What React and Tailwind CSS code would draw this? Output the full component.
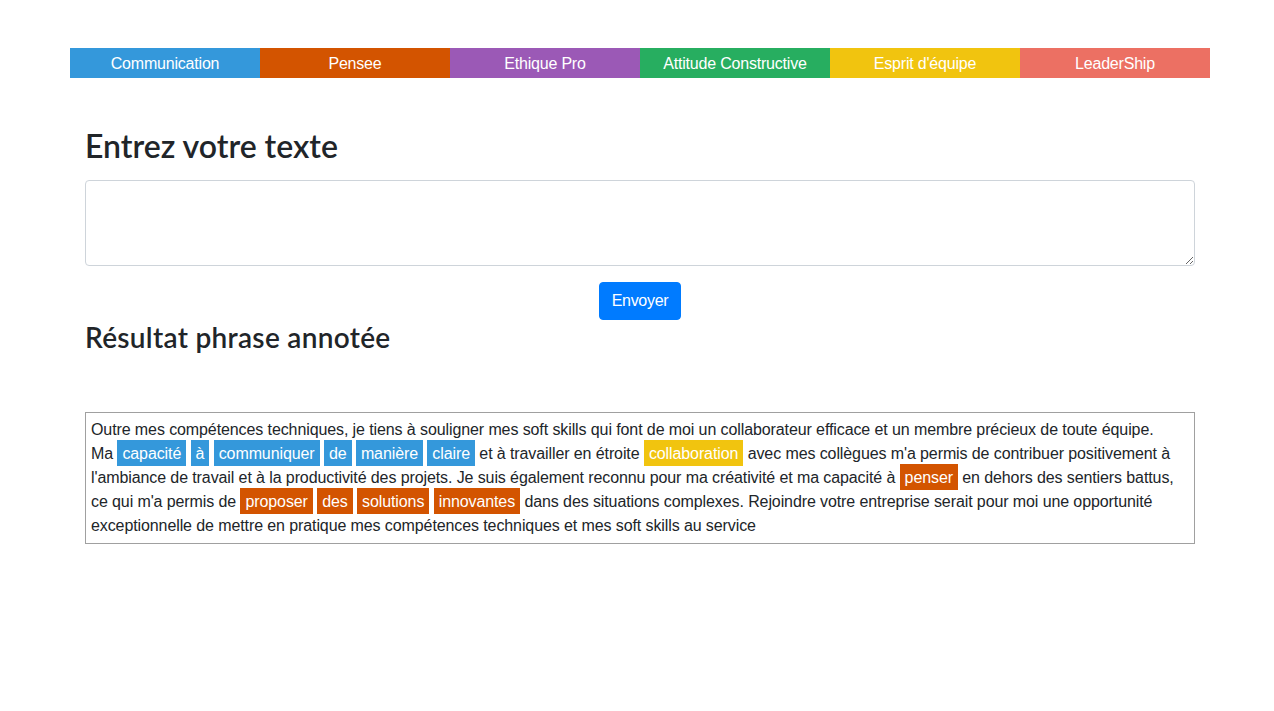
import React, { useState } from 'react';

const categories = [
  { label: 'Communication', bg: 'bg-[#3498db]' },
  { label: 'Pensee', bg: 'bg-[#d35400]' },
  { label: 'Ethique Pro', bg: 'bg-[#9b59b6]' },
  { label: 'Attitude Constructive', bg: 'bg-[#27ae60]' },
  { label: "Esprit d'équipe", bg: 'bg-[#f1c40f]' },
  { label: 'LeaderShip', bg: 'bg-[#ec7063]' },
];

const colorFor = {
  com: 'bg-[#3498db]',
  pen: 'bg-[#d35400]',
  esp: 'bg-[#f1c40f]',
};

// sentence split into plain text, tagged words and line breaks
const annotated = [
  "Outre mes compétences techniques, je tiens à souligner mes soft skills qui font de moi un collaborateur efficace et un membre précieux de toute équipe.",
  'br',
  'Ma',
  ['capacité', 'com'],
  ['à', 'com'],
  ['communiquer', 'com'],
  ['de', 'com'],
  ['manière', 'com'],
  ['claire', 'com'],
  "et à travailler en étroite",
  ['collaboration', 'esp'],
  "avec mes collègues m'a permis de contribuer positivement à",
  'br',
  "l'ambiance de travail et à la productivité des projets. Je suis également reconnu pour ma créativité et ma capacité à",
  ['penser', 'pen'],
  "en dehors des sentiers battus,",
  'br',
  "ce qui m'a permis de",
  ['proposer', 'pen'],
  ['des', 'pen'],
  ['solutions', 'pen'],
  ['innovantes', 'pen'],
  "dans des situations complexes. Rejoindre votre entreprise serait pour moi une opportunité",
  'br',
  "exceptionnelle de mettre en pratique mes compétences techniques et mes soft skills au service",
];

export default function App() {
  const [text, setText] = useState('');

  return (
    <div className="min-h-screen bg-white pl-[6px] font-['Segoe_UI','Liberation_Sans',Arial,sans-serif] text-[#212529]">
      <div className="mx-auto w-[1140px] pt-[48px]">
        <div className="grid grid-cols-6 h-[30px]">
          {categories.map((c) => (
            <div key={c.label} className={`${c.bg} flex items-center justify-center pt-px text-white text-base tracking-[-0.2px]`}>
              {c.label}
            </div>
          ))}
        </div>

        <div className="px-[15px]">
          <h2 className="mt-[49px] mb-[15px] font-['Lato',sans-serif] text-[32px] font-semibold leading-[1.2]">Entrez votre texte</h2>
          <textarea
            value={text}
            onChange={(e) => setText(e.target.value)}
            className="block w-full h-[86px] border border-[#ced4da] rounded px-3 py-1.5 outline-none"
          />
          <div className="flex justify-center mt-4">
            <button className="bg-[#007bff] text-white text-base leading-6 px-3 py-1.5 border border-[#007bff] rounded tracking-[-0.3px]">
              Envoyer
            </button>
          </div>
          <h3 className="mt-[1px] font-['Lato',sans-serif] text-[28px] font-semibold leading-[1.2] tracking-[0.3px]">Résultat phrase annotée</h3>

          <div className="mt-[57px] border border-[#a0a0a0] p-[5px] text-base leading-6 tracking-[-0.1px]">
            {annotated.map((part, i) =>
              part === 'br' ? (
                <br key={i} />
              ) : typeof part === 'string' ? (
                <span key={i}>{part} </span>
              ) : (
                <React.Fragment key={i}>
                  <span className={`${colorFor[part[1]]} text-white px-[5px] pt-[5px] pb-[4px]`}>{part[0]}</span>{' '}
                </React.Fragment>
              )
            )}
          </div>
        </div>
      </div>
    </div>
  );
}
